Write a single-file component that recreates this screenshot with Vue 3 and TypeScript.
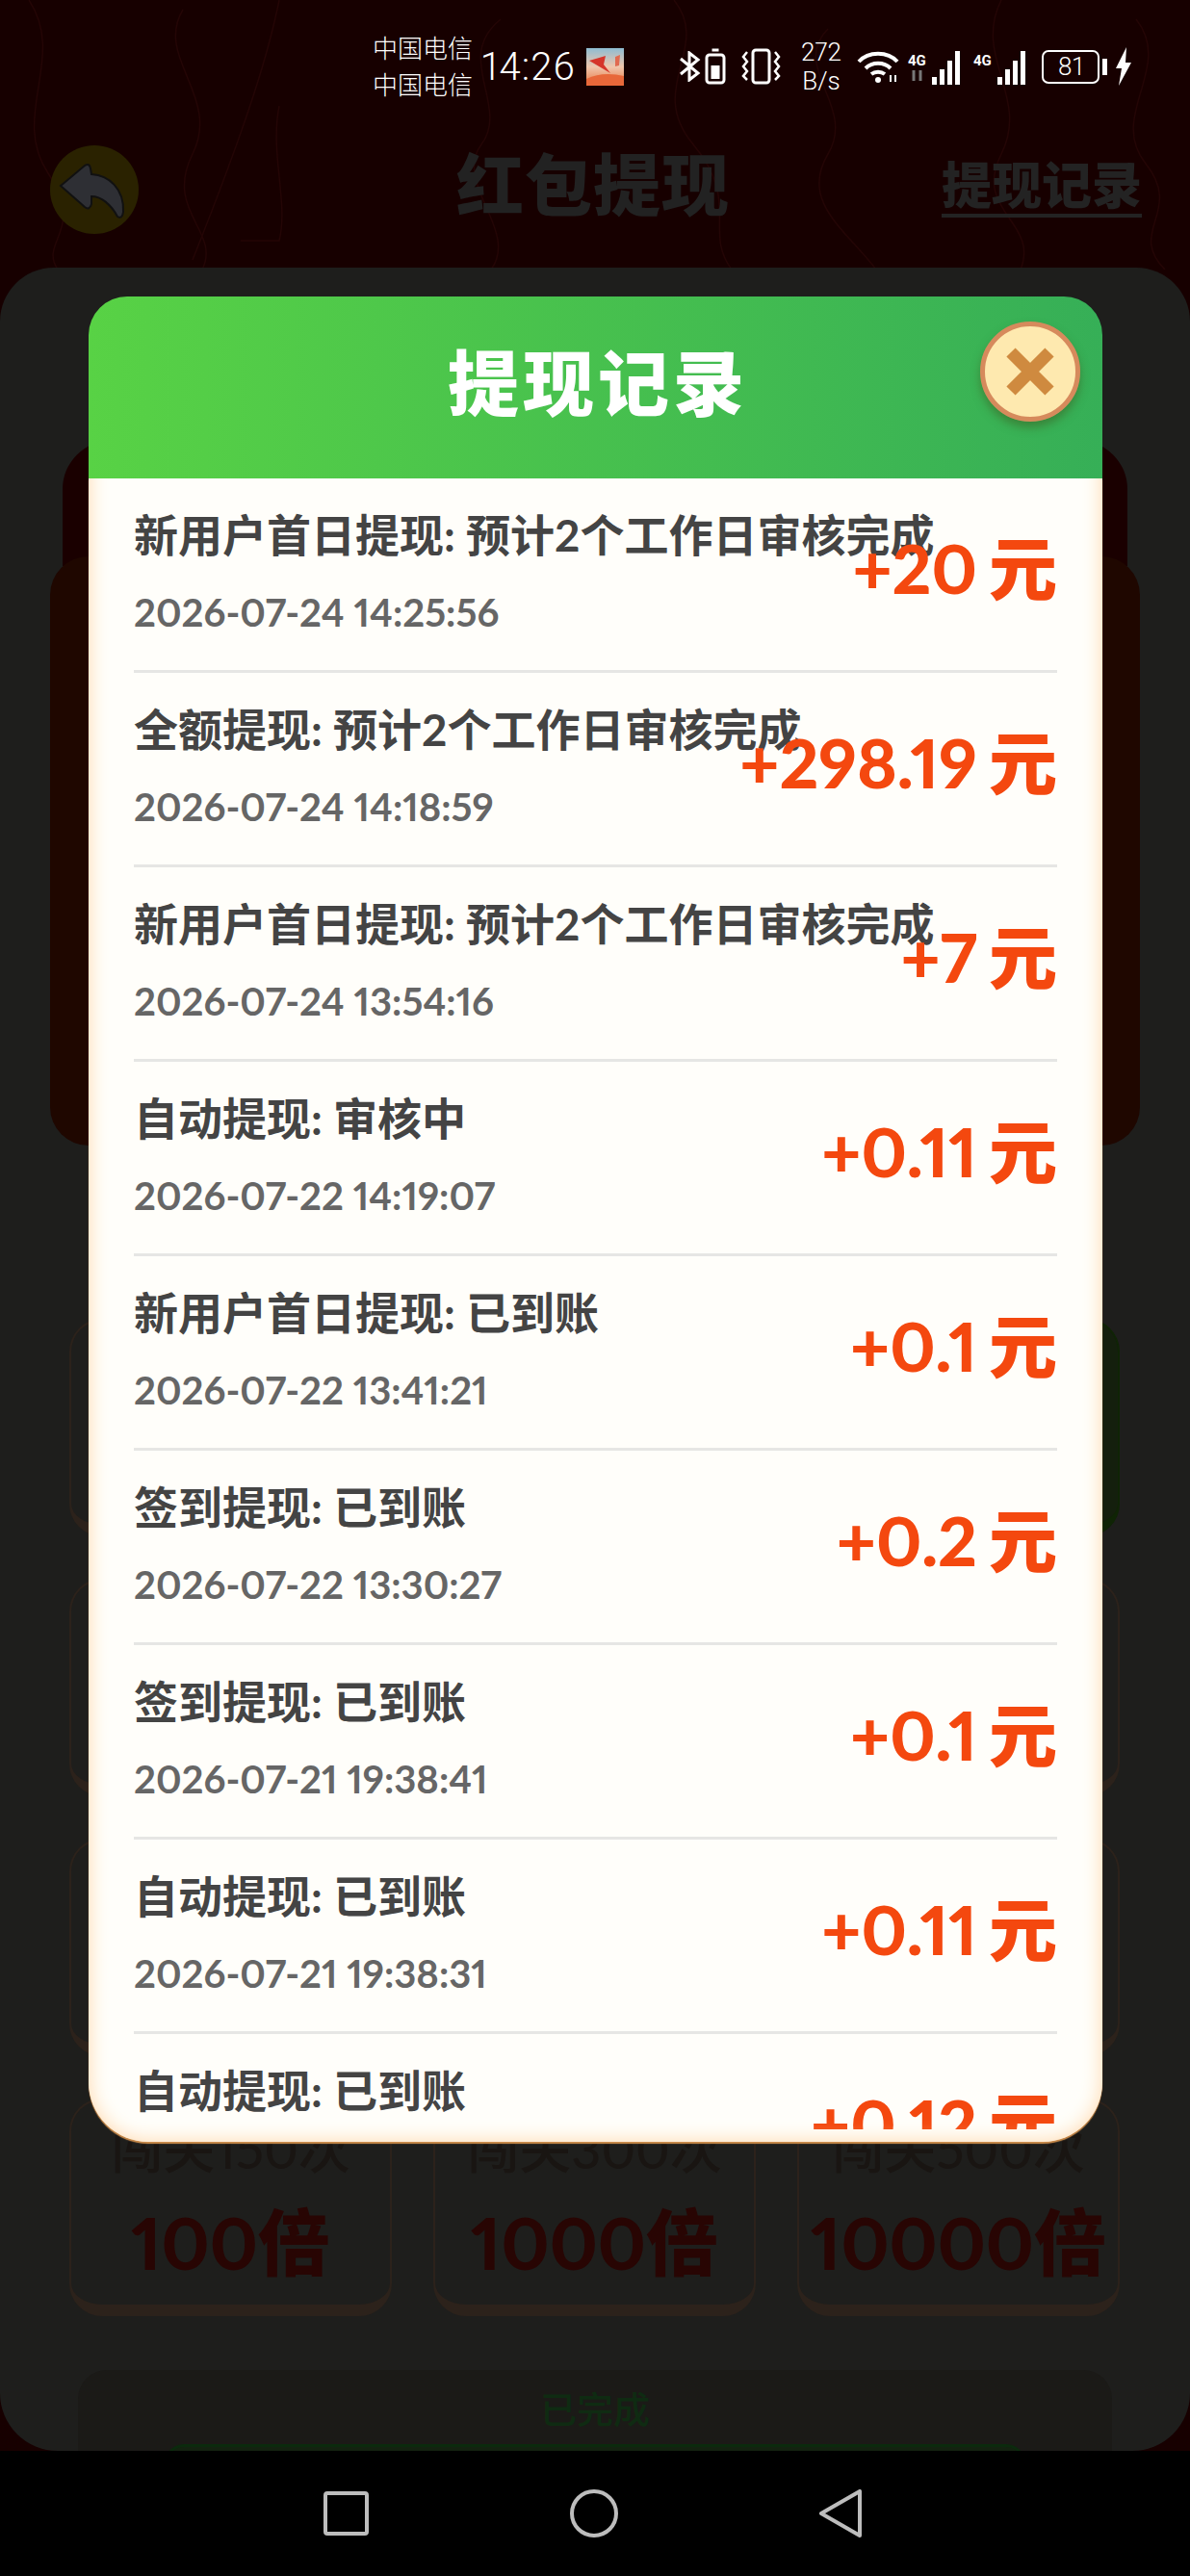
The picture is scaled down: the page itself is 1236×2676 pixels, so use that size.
<template>
  <div class="screen">
    <div class="page">
      <svg class="pattern" width="1236" height="280" viewBox="0 0 1236 280" fill="none" stroke="#240505" stroke-width="1.5">
        <path d="M30 0c40 60-20 120 20 180s-10 70 10 100" />
        <path d="M190 10c-30 50 40 90 10 150s30 80 10 120" />
        <path d="M290 0c-10 50-30 120-90 270M250 250h40c10-40-10-90 0-140" />
        <path d="M520 20c-50 40 10 90-20 130s40 90 10 130" />
        <path d="M700 0c40 50-30 90 20 150s10 90 40 130" />
        <path d="M860 30c-40 40 30 80 0 130s20 80 50 120" />
        <path d="M1040 0c-30 60 30 100 0 160s40 70 20 120" />
        <path d="M1180 20c40 50-30 100 10 150s-20 70 20 110" />
      </svg>

      <div class="status">
        <div class="carriers">
          <span>中国电信</span>
          <span>中国电信</span>
        </div>
        <span class="time">14:26</span>
        <svg class="thumb" width="39" height="39" viewBox="0 0 39 39">
          <defs>
            <linearGradient id="sky" x1="0" y1="0" x2="0" y2="1">
              <stop offset="0" stop-color="#8fbcd2" />
              <stop offset="0.5" stop-color="#f0c6ac" />
              <stop offset="1" stop-color="#e9743f" />
            </linearGradient>
          </defs>
          <rect width="39" height="39" fill="url(#sky)" />
          <path d="M3 13 20 8l-2 9 7 9z" fill="#d5352b" />
          <path d="M30 9l5-2-1 11-4 1z" fill="#e06a50" />
          <path d="M0 32c12-6 26-6 39-3v10H0z" fill="#e8683a" />
        </svg>
        <div class="icons">
          <svg width="23" height="32" viewBox="0 0 23 32" fill="none" stroke="#fff" stroke-width="3">
            <path d="M2 8 20 23l-9 7V2l9 7L2 24" />
          </svg>
          <svg class="tight" width="22" height="38" viewBox="0 0 21 38" fill="none" stroke="#fff" stroke-width="3">
            <rect x="1.5" y="7" width="18" height="29" rx="3" />
            <path d="M7 2h7" />
            <rect x="6" y="18" width="9" height="14" fill="#fff" stroke="none" />
          </svg>
          <svg class="vibrate" width="45" height="38" viewBox="0 0 43 38" fill="none" stroke="#fff" stroke-width="3">
            <rect x="13" y="2" width="17" height="34" rx="3" />
            <path d="M7 4 3 9l4 5-4 5 4 5-4 5 4 4M36 4l4 5-4 5 4 5-4 5 4 5-4 4" stroke-width="2.5" />
          </svg>
          <div class="speed">
            <span>272</span>
            <span>B/s</span>
          </div>
          <svg class="wifi" width="44" height="34" viewBox="0 0 44 34" fill="none" stroke="#fff" stroke-width="4">
            <path d="M2 12C12 1 32 1 42 12" />
            <path d="M9 19c7-7 19-7 26 0" />
            <path d="M15 25c4-3 10-3 14 0" />
            <circle cx="22" cy="31" r="3" fill="#fff" stroke="none" />
            <path d="M35 26v7M40 26v7" stroke-width="2" />
          </svg>
          <div class="signal">
            <div class="net">
              <span>4G</span>
              <svg width="20" height="11" viewBox="0 0 20 11" fill="none" stroke="#777" stroke-width="3">
                <path d="M6 0v11M13 0v11" />
              </svg>
            </div>
            <div class="bars">
              <i style="height: 8px" />
              <i style="height: 16px" />
              <i style="height: 25px" />
              <i style="height: 35px" />
            </div>
          </div>
          <div class="signal second">
            <div class="net top">
              <span>4G</span>
            </div>
            <div class="bars">
              <i style="height: 8px" />
              <i style="height: 16px" />
              <i style="height: 25px" />
              <i style="height: 35px" />
            </div>
          </div>
          <div class="battery"><span>81</span></div>
          <i class="nub" />
          <svg width="18" height="40" viewBox="0 0 18 40" fill="#fff">
            <path d="M12 0 1 22h6L4 40 17 16h-6z" />
          </svg>
        </div>
      </div>

      <div class="topbar">
        <div class="back">
          <svg width="90" height="90" viewBox="0 0 90 90">
            <path d="M10 41 35 20q5-3 6 3l1 6c18 1 34 15 33 39q-1 8-6 5C62 60 52 52 42 52v8q-2 7-7 3z" fill="#2e2f34" stroke="#111" stroke-width="2" />
          </svg>
        </div>
        <h1 class="page-title">红包提现</h1>
        <span class="page-link">提现记录</span>
      </div>

      <div class="panel">
        <div class="hero-top" />
        <div class="hero" />
        <div class="tasks">
          <div v-for="(task, i) in tasks" :key="i" class="task" :class="{ done: task.done }">
            <span class="task-label">{{ task.label }}</span>
            <span class="task-rate">{{ task.rate }}</span>
          </div>
        </div>
        <div class="finish">
          <span>已完成</span>
          <div class="finish-btn" />
        </div>
      </div>
    </div>

    <div class="nav">
      <svg width="47" height="46" viewBox="0 0 47 46" fill="none" stroke="#bdbdbd" stroke-width="4">
        <rect x="2" y="2" width="43" height="42" rx="2" />
      </svg>
      <svg width="50" height="50" viewBox="0 0 50 50" fill="none" stroke="#bdbdbd" stroke-width="4">
        <circle cx="25" cy="25" r="23" />
      </svg>
      <svg width="44" height="50" viewBox="0 0 44 50" fill="none" stroke="#bdbdbd" stroke-width="4" stroke-linejoin="round">
        <path d="M42 2v46L2 25z" />
      </svg>
    </div>

    <div class="modal">
      <div class="modal-head">
        <h2>提现记录</h2>
        <button class="close" aria-label="关闭">
          <svg width="56" height="56" viewBox="0 0 56 56" stroke="#cf8a3f" stroke-width="13">
            <path d="M8 8 48 48M48 8 8 48" />
          </svg>
        </button>
      </div>
      <div class="modal-body">
        <div class="records">
          <div v-for="(item, i) in records" :key="i" class="record">
            <div class="record-info">
              <span class="record-title">{{ item.title }}</span>
              <span class="record-date">{{ item.date }}</span>
            </div>
            <span class="record-amount">{{ item.amount }}<em>元</em></span>
          </div>
        </div>
      </div>
    </div>
  </div>
</template>

<script setup lang="ts">
interface WithdrawRecord {
  title: string
  date: string
  amount: string
}

interface Task {
  label: string
  rate: string
  done?: boolean
}

const records: WithdrawRecord[] = [
  { title: '新用户首日提现: 预计2个工作日审核完成', date: '2026-07-24 14:25:56', amount: '+20' },
  { title: '全额提现: 预计2个工作日审核完成', date: '2026-07-24 14:18:59', amount: '+298.19' },
  { title: '新用户首日提现: 预计2个工作日审核完成', date: '2026-07-24 13:54:16', amount: '+7' },
  { title: '自动提现: 审核中', date: '2026-07-22 14:19:07', amount: '+0.11' },
  { title: '新用户首日提现: 已到账', date: '2026-07-22 13:41:21', amount: '+0.1' },
  { title: '签到提现: 已到账', date: '2026-07-22 13:30:27', amount: '+0.2' },
  { title: '签到提现: 已到账', date: '2026-07-21 19:38:41', amount: '+0.1' },
  { title: '自动提现: 已到账', date: '2026-07-21 19:38:31', amount: '+0.11' },
  { title: '自动提现: 已到账', date: '2026-07-21 19:38:20', amount: '+0.12' }
]

// upper rows sit behind the dialog, only their edges show
const tasks: Task[] = [
  { label: '', rate: '' },
  { label: '', rate: '' },
  { label: '', rate: '', done: true },
  { label: '', rate: '' },
  { label: '', rate: '' },
  { label: '', rate: '' },
  { label: '', rate: '' },
  { label: '', rate: '' },
  { label: '', rate: '' },
  { label: '闯关150次', rate: '100倍' },
  { label: '闯关300次', rate: '1000倍' },
  { label: '闯关500次', rate: '10000倍' }
]
</script>

<style>
body {
  background: #000;
}
</style>

<style scoped>
.screen {
  position: relative;
  width: 1236px;
  height: 2676px;
  overflow: hidden;
  background: #000;
  font-family: "Lato", "Noto Sans CJK SC", sans-serif;
  font-feature-settings: "pnum";
}

.page {
  position: relative;
  height: 2546px;
  overflow: hidden;
  background: #170000;
}

.pattern {
  position: absolute;
  top: 0;
  left: 0;
}

.status {
  position: relative;
  display: flex;
  align-items: center;
  height: 70px;
  padding: 34px 60px 0 387px;
  color: #fff;
  box-sizing: content-box;
}

.carriers {
  display: flex;
  flex-direction: column;
  width: 113px;
  font-size: 26px;
  font-weight: 300;
  line-height: 38px;
}

.time {
  width: 109px;
  font-family: "Roboto", sans-serif;
  font-size: 40px;
  font-weight: 300;
  letter-spacing: 1px;
}

.thumb {
  flex: none;
}

.icons {
  display: flex;
  align-items: center;
  margin-left: 57px;
}

.tight {
  margin-left: 4px;
}

.vibrate {
  margin-left: 14px;
}

.speed {
  display: flex;
  flex-direction: column;
  align-items: center;
  width: 44px;
  margin-left: 18px;
  font-family: "Roboto", sans-serif;
  font-size: 26px;
  font-weight: 300;
  line-height: 30px;
}

.wifi {
  margin-left: 15px;
}

.signal {
  display: flex;
  align-items: flex-end;
  height: 38px;
  margin-left: 9px;
}

.signal.second {
  margin-left: 14px;
}

.net {
  display: flex;
  flex-direction: column;
  width: 22px;
  height: 35px;
  font-family: "Roboto", sans-serif;
  font-size: 15px;
  font-weight: 700;
  line-height: 20px;
}

.net.top {
  justify-content: flex-start;
}

.bars {
  display: flex;
  align-items: flex-end;
  gap: 3px;
  margin-left: 3px;
}

.bars i {
  display: block;
  width: 5px;
  background: #fff;
}

.battery {
  display: flex;
  align-items: center;
  justify-content: center;
  width: 60px;
  height: 35px;
  margin-left: 17px;
  border: 2.5px solid #fff;
  border-radius: 7px;
  box-sizing: border-box;
  font-family: "Roboto", sans-serif;
  font-size: 26px;
  font-weight: 300;
}

.nub {
  display: block;
  width: 5px;
  height: 17px;
  margin-left: 3px;
  background: #fff;
}

.icons > svg:last-child {
  margin-left: 8px;
}

.topbar {
  position: relative;
  display: flex;
  align-items: center;
  height: 174px;
  padding: 12px 50px 0 52px;
  box-sizing: border-box;
}

.back {
  display: flex;
  align-items: center;
  justify-content: center;
  width: 92px;
  height: 92px;
  border-radius: 50%;
  background: #2a2200;
}

.page-title {
  position: absolute;
  left: -4px;
  right: 0;
  margin: -18px 0 0;
  text-align: center;
  font-size: 70px;
  font-weight: 900;
  letter-spacing: 1px;
  color: #222;
}

.page-link {
  margin: -6px 0 0 auto;
  font-size: 52px;
  font-weight: 900;
  line-height: 60px;
  color: #232323;
  border-bottom: 4px solid #232323;
}

.panel {
  position: relative;
  height: 2268px;
  padding-top: 180px;
  border-radius: 56px 56px 60px 60px;
  background: #1e1e1c;
  box-sizing: border-box;
}

.hero-top {
  height: 130px;
  margin: 0 65px;
  border-radius: 50px 50px 0 0;
  background: #1a0000;
}

.hero {
  height: 612px;
  margin: -10px 52px 0;
  border-radius: 40px;
  background: #1f0700;
}

.tasks {
  display: grid;
  grid-template-columns: repeat(3, 335px);
  grid-auto-rows: 226px;
  gap: 44px 43px;
  margin-top: 180px;
  padding-left: 72px;
}

.task {
  display: flex;
  flex-direction: column;
  align-items: center;
  padding-top: 21px;
  border: 2px solid #2c221b;
  border-bottom-width: 12px;
  border-radius: 34px;
  box-sizing: border-box;
}

.task.done {
  border-color: #0f2405;
  background: #141f0d;
}

.task-label {
  height: 60px;
  font-size: 54px;
  font-weight: 500;
  line-height: 60px;
  color: #191512;
  white-space: nowrap;
}

.task-rate {
  margin-top: 21px;
  font-size: 75px;
  font-weight: 900;
  line-height: 90px;
  color: #280503;
}

.finish {
  display: flex;
  flex-direction: column;
  align-items: center;
  height: 200px;
  margin: 56px 81px 0;
  padding-top: 17px;
  border-radius: 30px;
  background: #1b1a17;
  box-sizing: border-box;
}

.finish span {
  font-size: 38px;
  font-weight: 500;
  line-height: 46px;
  color: #0f2b12;
}

.finish-btn {
  width: 894px;
  height: 60px;
  margin-top: 14px;
  border: 3px solid #0b2a0d;
  border-radius: 20px;
  background: #132210;
  box-sizing: border-box;
}

.nav {
  display: flex;
  align-items: center;
  justify-content: center;
  gap: 209px;
  height: 130px;
  padding-right: 6px;
  box-sizing: border-box;
  background: #000;
}

.modal {
  position: absolute;
  top: 308px;
  left: 92px;
  display: flex;
  flex-direction: column;
  width: 1053px;
  height: 1917px;
}

.modal-head {
  position: relative;
  display: flex;
  align-items: center;
  justify-content: center;
  flex: none;
  height: 189px;
  border-radius: 40px 40px 0 0;
  background: linear-gradient(90deg, #58d245, #36af57);
}

.modal-head h2 {
  margin: -10px 0 0 5px;
  font-size: 74px;
  font-weight: 900;
  letter-spacing: 4px;
  line-height: 90px;
  color: #fff;
}

.close {
  position: absolute;
  top: 26px;
  right: 23px;
  z-index: 1;
  display: flex;
  align-items: center;
  justify-content: center;
  width: 104px;
  height: 104px;
  padding: 0;
  border: 5px solid #d68a5c;
  border-radius: 50%;
  background: radial-gradient(circle at 50% 44%, #fee9af 72%, #f7c88a);
  box-shadow: 0 6px 10px rgba(60, 90, 30, 0.5);
}

.modal-body {
  position: relative;
  flex: 1;
  min-height: 0;
  padding-bottom: 13px;
  border-radius: 0 0 62px 62px;
  background: #fffefa;
  box-shadow: 0 2px 1px #c98a4a;
  box-sizing: border-box;
}

/* warm glow on the sides and bottom only, the top meets the green header */
.modal-body::after {
  content: "";
  position: absolute;
  inset: -30px 0 0;
  border-radius: inherit;
  box-shadow: inset 0 0 20px #ffd9ad;
  clip-path: inset(30px 0 0);
  pointer-events: none;
}

.records {
  height: 100%;
  overflow: hidden;
  padding: 0 47px;
  box-sizing: border-box;
}

.record {
  display: flex;
  align-items: center;
  justify-content: space-between;
  height: 202px;
  border-bottom: 3px solid #e6e6e4;
  box-sizing: border-box;
}

.record-info {
  display: flex;
  flex-direction: column;
  flex: none;
  width: 0;
  padding-bottom: 6px;
  white-space: nowrap;
}

.record-title {
  font-size: 46px;
  font-weight: 700;
  line-height: 60px;
  color: #444;
}

.record-date {
  margin-top: 25px;
  font-size: 40px;
  font-weight: 700;
  line-height: 50px;
  color: #666;
}

.record-amount {
  display: flex;
  align-items: baseline;
  padding-bottom: 14px;
  font-size: 71px;
  font-weight: 900;
  line-height: 90px;
  color: #f4480f;
}

.record-amount em {
  margin-left: 12px;
  font-style: normal;
}
</style>
